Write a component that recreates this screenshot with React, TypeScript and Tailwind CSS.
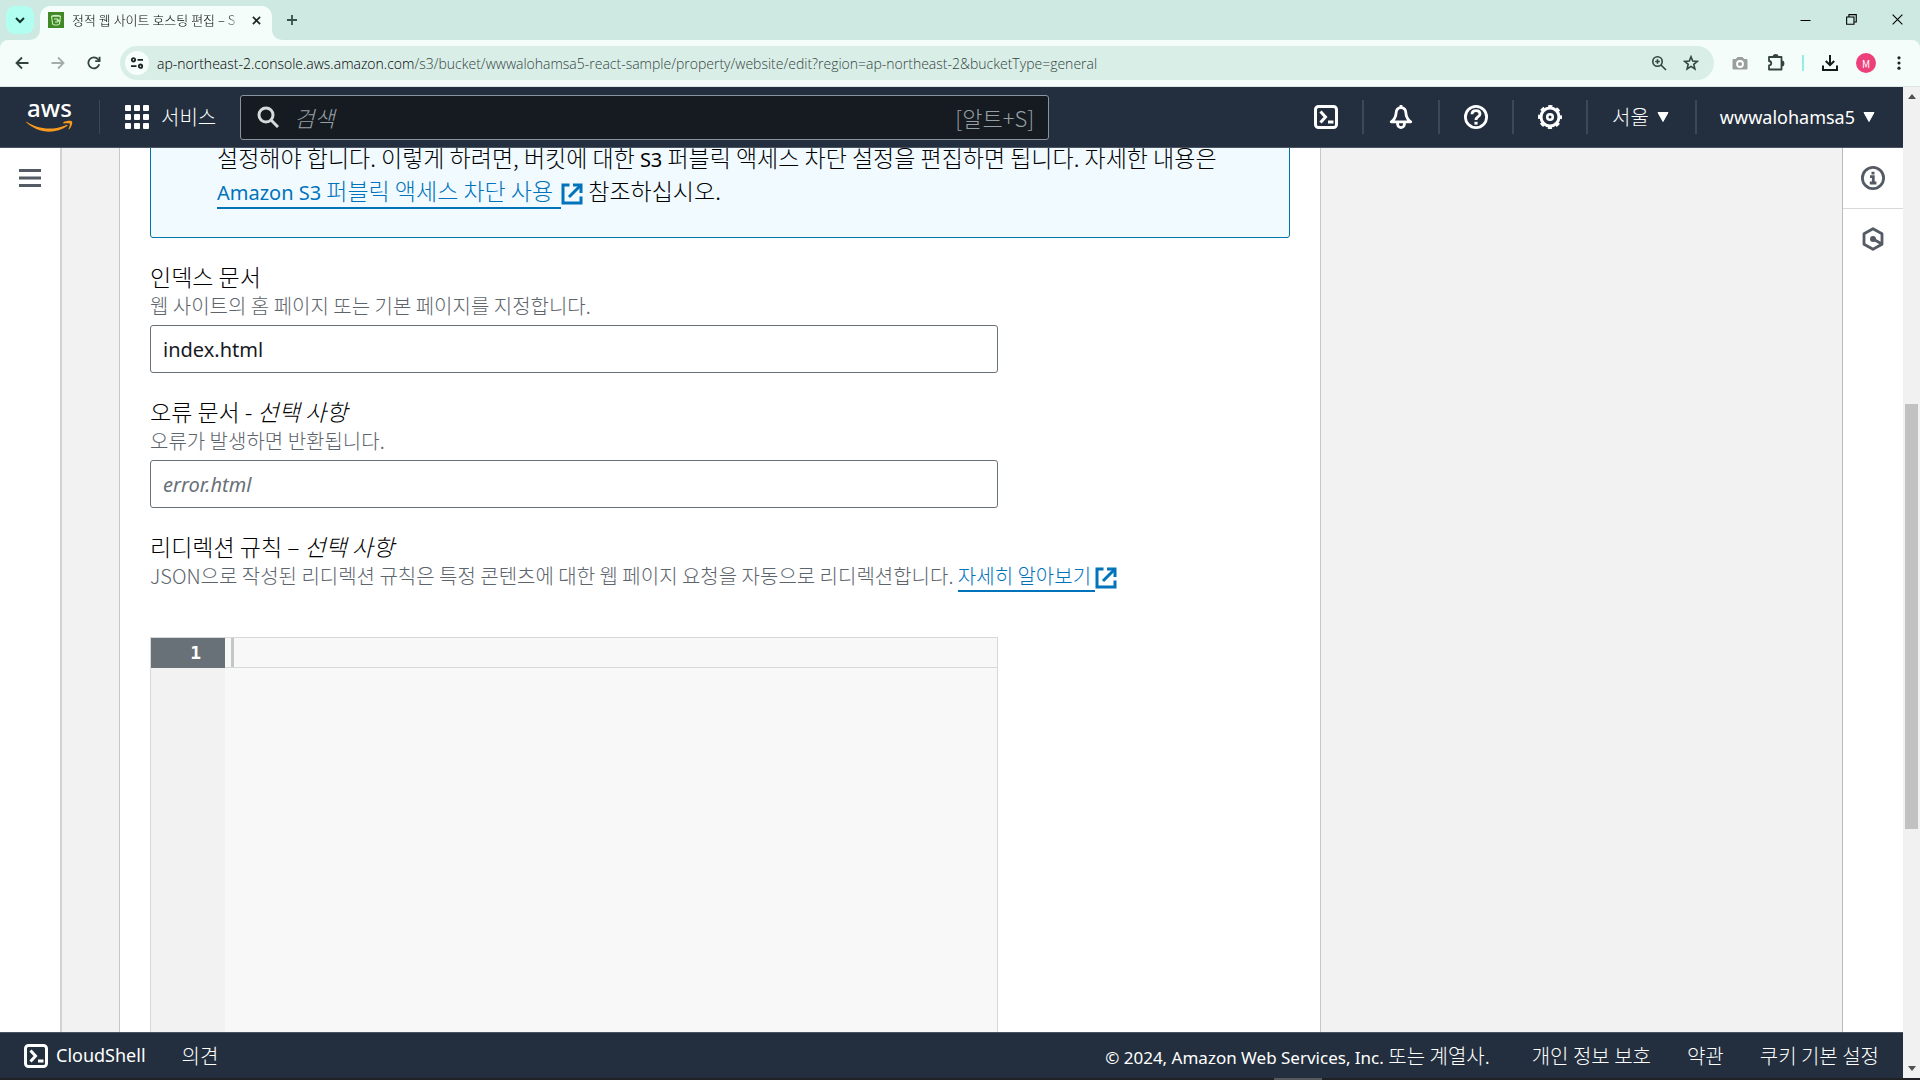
import type { ReactNode } from "react";

const KOREAN = "font-['Noto_Sans_CJK_KR',sans-serif] font-light";

function Latin({ children }: { children: ReactNode }) {
  return <span className="font-['Noto_Sans',sans-serif] text-[20px] leading-none font-normal">{children}</span>;
}

function CloudShellIcon() {
  return (
    <svg viewBox="0 0 24 24" className="size-6 shrink-0" fill="none" stroke="currentColor" strokeWidth="3">
      <rect x="1.5" y="1.5" width="21" height="21" rx="3" />
      <path d="M6.5 6.5l5 5.5-5 5.5" />
      <path d="M14 17h5.5" />
    </svg>
  );
}

function BellIcon() {
  return (
    <svg viewBox="0 0 24 24" className="size-6" fill="none" stroke="currentColor" strokeWidth="2.8" strokeLinejoin="round">
      <path d="M12 2.600c-3 0-4.700 2.200-4.900 5.400-.2 4.200-1.600 6.600-4.900 8.800h19.600c-3.300-2.200-4.700-4.600-4.900-8.800C16.700 4.800 15 2.600 12 2.600z" />
      <path d="M12 0v3" />
      <path d="M8.600 17v2.200a3.400 3.400 0 0 0 6.800 0V17" />
    </svg>
  );
}

function HelpIcon() {
  return (
    <svg viewBox="0 0 24 24" className="size-6" fill="none" stroke="currentColor" strokeWidth="2.8">
      <circle cx="12" cy="12" r="10.600" />
      <path d="M8 9.300C8 7 9.600 5.700 12 5.700s4 1.300 4 3.300c0 2.800-4 2.700-4 6" />
      <path d="M12 16.800v2.800" strokeWidth="3.200" />
    </svg>
  );
}

function GearIcon() {
  return (
    <svg viewBox="0 0 24 24" className="size-6" fill="none" stroke="currentColor">
      <circle cx="12" cy="12" r="9" strokeWidth="3" />
      <circle cx="12" cy="12" r="10.800" strokeWidth="2.400" strokeDasharray="4.240 4.240" strokeDashoffset="2.120" />
      <circle cx="12" cy="12" r="2.800" strokeWidth="2.600" />
    </svg>
  );
}

function ExternalIcon() {
  return (
    <svg viewBox="0 0 22 22" className="-my-1 inline-block size-[22px] align-[-1px]" fill="none" stroke="currentColor" strokeWidth="3">
      <path d="M8.500 2H2v18h18v-6.500" />
      <path d="M12 2h8v8" />
      <path d="M20 2L8 14" />
    </svg>
  );
}

function Caret() {
  return (
    <svg viewBox="0 0 12 10" className="h-[10px] w-3" fill="currentColor">
      <path d="M1 .5h10L6 9.500z" stroke="currentColor" strokeLinejoin="round" />
    </svg>
  );
}

function AwsLogo() {
  return (
    <a href="#home" aria-label="AWS" className="flex w-[47px] flex-col items-center font-['Noto_Sans',sans-serif] text-white">
      <span className="h-[17px] text-[24px] leading-[10px] font-medium">aws</span>
      <svg viewBox="0 0 47 12" className="h-3 w-[47px]">
        <path d="M.6 1.800C6.600 6 15 8.600 23 8.600c6 0 12-1.400 17.400-3.700.9-.4 1.600.5.800 1.200C36 10 29.400 11.800 23.400 11.800 14.600 11.800 6.400 8.200.4 2.600-.1 2.100.2 1.500.6 1.800z" fill="#f79a1e" />
        <path d="M37.500 2.300c2-1.400 7.600-2 8.500-.9.8 1.200-.5 5.800-2.900 7.900-.4.300-.8.100-.6-.4.600-1.400 1.800-4.500 1.200-5.200-.6-.8-3.900-.400-5.900-.1-.6.1-.8-.9-.3-1.300z" fill="#f79a1e" />
      </svg>
    </a>
  );
}

function BrowserTabs() {
  return (
    <div className="flex h-10 items-start bg-[#cde9e2] pl-1.5">
      <button aria-label="탭 검색" className="mt-1.5 flex size-7 items-center justify-center rounded-[9px] bg-[#b0fff0] text-[#16302b]">
        <svg viewBox="0 0 10 10" className="size-[10px]" fill="none" stroke="currentColor" strokeWidth="2">
          <path d="M1 3l4 4 4-4" />
        </svg>
      </button>
      <div className="relative mt-1.5 ml-1.5 flex h-[34px] w-[232px] items-center rounded-t-[10px] bg-[#f4fdfa] pr-2 pb-1.5 pl-2">
        <svg viewBox="0 0 10 10" className="absolute bottom-0 -left-[10px] size-[10px]" fill="#f4fdfa">
          <path d="M10 0v10H0A10 10 0 0 0 10 0z" />
        </svg>
        <svg viewBox="0 0 10 10" className="absolute -right-[10px] bottom-0 size-[10px]" fill="#f4fdfa">
          <path d="M0 0v10h10A10 10 0 0 1 0 0z" />
        </svg>
        <svg viewBox="0 0 16 16" className="size-4 shrink-0">
          <rect width="16" height="16" fill="#3f8a24" />
          <path d="M3.500 4.200h9l-1.200 8.200c-1.800.9-4.800.9-6.600 0z" fill="none" stroke="#d9f3cd" strokeWidth="1" />
          <path d="M3.500 4.200c2-1.200 7-1.200 9 0M6 7h4v3H7M8.500 8l4.200 1.200" fill="none" stroke="#d9f3cd" strokeWidth="1" />
        </svg>
        <span className="ml-2 w-[168px] overflow-hidden mask-r-from-92% mask-r-to-100% text-[13px] leading-5 whitespace-nowrap text-black">
          정적 웹 사이트 호스팅 편집 – S
        </span>
        <button aria-label="탭 닫기" className="ml-auto flex size-4 items-center justify-center text-[#1b2623]">
          <svg viewBox="0 0 10 10" className="size-[9px]" stroke="currentColor" strokeWidth="1.800">
            <path d="M1 1l8 8M9 1L1 9" />
          </svg>
        </button>
      </div>
      <button aria-label="새 탭" className="mt-3 ml-3 flex size-4 items-center justify-center text-[#34514a]">
        <svg viewBox="0 0 12 12" className="size-3" stroke="currentColor" strokeWidth="1.800">
          <path d="M6 1v10M1 6h10" />
        </svg>
      </button>
      <div className="mt-3.5 mr-[17px] ml-auto flex items-center gap-[35px] text-black">
        <button aria-label="최소화">
          <svg viewBox="0 0 11 11" className="size-[11px]" stroke="currentColor"><path d="M.5 6.500h10" /></svg>
        </button>
        <button aria-label="이전 크기로 복원">
          <svg viewBox="0 0 12 12" className="size-[11px]" fill="none" stroke="currentColor" strokeWidth="1.200">
            <path d="M.7 3.200h8v8h-8zM3.200 3.200V.7h8v8H8.700" />
          </svg>
        </button>
        <button aria-label="닫기">
          <svg viewBox="0 0 12 12" className="size-[11px]" stroke="currentColor" strokeWidth="1.200"><path d="M.7.7l10.600 10.600M11.300.7L.7 11.300" /></svg>
        </button>
      </div>
    </div>
  );
}

function BrowserToolbar() {
  return (
    <div className="bg-[#cde9e2]">
      <div className="flex h-[47px] items-center rounded-t-lg border-b border-[#dce6e3] bg-[#f4fdfa] pr-[19px] pl-[15px] text-[#33443f]">
        <button aria-label="뒤로">
          <svg viewBox="0 0 14 14" className="size-[14px]" fill="none" stroke="currentColor" strokeWidth="1.800">
            <path d="M13.500 7H2M7 1.500L1.500 7 7 12.500" />
          </svg>
        </button>
        <button aria-label="앞으로" className="ml-[22px] text-[#a3aeab]">
          <svg viewBox="0 0 14 14" className="size-[14px]" fill="none" stroke="currentColor" strokeWidth="1.800">
            <path d="M.5 7H12M7 1.500L12.500 7 7 12.500" />
          </svg>
        </button>
        <button aria-label="새로고침" className="ml-[22px]">
          <svg viewBox="0 0 14 14" className="size-[14px]" fill="none" stroke="currentColor" strokeWidth="1.800">
            <path d="M12.200 8.300A5.500 5.500 0 1 1 11 3.200L12.600 4.800" />
            <path d="M12.600.8v4.400H8.200" />
          </svg>
        </button>
        <div className="ml-[19px] flex h-[34px] min-w-0 flex-1 items-center rounded-full bg-[#daeee8] pr-[15px] pl-[5px]">
          <button aria-label="사이트 정보" className="flex size-6 shrink-0 items-center justify-center rounded-full bg-[#f7fffc] text-[#1b2623]">
            <svg viewBox="0 0 14 12" className="h-3 w-[14px]" fill="none" stroke="currentColor" strokeWidth="1.800">
              <circle cx="3.500" cy="2.800" r="1.700" />
              <path d="M7.500 2.800H13M1 9.200h5.500" />
              <circle cx="10.500" cy="9.200" r="1.700" />
            </svg>
          </button>
          <div className="ml-2 min-w-0 flex-1 font-['Open_Sans',sans-serif] text-[14px] font-light whitespace-nowrap text-[#33443f]">
            <span className="text-black">ap-northeast-2.console.aws.amazon.com</span>
            /s3/bucket/wwwalohamsa5-react-sample/property/website/edit?region=ap-northeast-2&amp;bucketType=general
          </div>
          <button aria-label="확대/축소">
            <svg viewBox="0 0 16 16" className="size-4" fill="none" stroke="currentColor" strokeWidth="1.600">
              <circle cx="6.500" cy="6.500" r="4.700" />
              <path d="M10 10l5 5M6.500 4.200v4.600M4.200 6.500h4.600" />
            </svg>
          </button>
          <button aria-label="북마크" className="ml-4">
            <svg viewBox="0 0 16 16" className="size-4" fill="none" stroke="currentColor" strokeWidth="1.600">
              <path d="M8 1.800l1.700 4.300 4.600.3-3.500 3 1.100 4.500L8 11.400l-3.900 2.500 1.100-4.500-3.500-3 4.600-.3z" />
            </svg>
          </button>
        </div>
        <div className="ml-[18px] flex items-center">
          <button aria-label="화면 캡처" className="text-[#9a9f9d]">
            <svg viewBox="0 0 16 14" className="h-[14px] w-4" fill="none" stroke="currentColor">
              <path d="M1 3.500h3L5.500 1.500h5L12 3.500h3v9.500H1z" fill="currentColor" strokeWidth="1" strokeLinejoin="round" />
              <circle cx="8" cy="8" r="3" stroke="#fff" strokeWidth="1.800" />
            </svg>
          </button>
          <button aria-label="확장 프로그램" className="ml-[19px]">
            <svg viewBox="0 0 18 18" className="size-[18px]" fill="none" stroke="currentColor" strokeWidth="1.800" strokeLinejoin="round">
              <path d="M2 3h12.500v12.500H2v-4c3-.3 3-4.200 0-4.500z" />
              <path d="M6.500 2.500a2 1.500 0 0 1 4 0M15 7.500a1.500 2 0 0 1 0 4" fill="currentColor" />
            </svg>
          </button>
          <span className="ml-[17px] h-4 w-0.5 bg-[#93efe2]" />
          <button aria-label="다운로드" className="ml-[18px] text-[#111b18]">
            <svg viewBox="0 0 16 16" className="size-4" fill="none" stroke="currentColor" strokeWidth="2">
              <path d="M8 0v10M3.800 6L8 10.200 12.200 6M1 10.500V15h14v-4.500" />
            </svg>
          </button>
          <button aria-label="프로필" className="ml-[18px] flex size-5 items-center justify-center rounded-full bg-[#ec407a] text-[10px] font-normal text-white">
            M
          </button>
          <button aria-label="메뉴" className="ml-[21px] text-[#1b2623]">
            <svg viewBox="0 0 4 14" className="h-[14px] w-1" fill="currentColor">
              <circle cx="2" cy="1.800" r="1.600" />
              <circle cx="2" cy="7" r="1.600" />
              <circle cx="2" cy="12.200" r="1.600" />
            </svg>
          </button>
        </div>
      </div>
    </div>
  );
}

function Divider() {
  return <span className="h-[34px] w-0.5 shrink-0 bg-[#3c4757]" />;
}

function ConsoleNav() {
  return (
    <header className="flex h-[61px] shrink-0 items-center border-b border-[#4a5361] bg-[#232f3e] pr-7 pl-[26px] text-white">
      <AwsLogo />
      <span className="ml-[26px] h-[34px] w-px bg-[#3c4757]" />
      <button className="ml-[25px] flex items-center gap-3 text-[20px]">
        <svg viewBox="0 0 24 24" className="size-6" fill="currentColor">
          {[0, 9, 18].map((y) => [0, 9, 18].map((x) => <rect key={`${x}-${y}`} x={x} y={y} width="6" height="6" rx="1" />))}
        </svg>
        서비스
      </button>
      <label className="ml-6 flex h-[45px] w-[809px] items-center rounded-[3px] border border-[#8a949f] bg-[#161a21] pr-[14px] pl-4">
        <svg viewBox="0 0 22 22" className="size-[22px] shrink-0 text-[#d5dbdb]" fill="none" stroke="currentColor" strokeWidth="3">
          <circle cx="9" cy="9" r="7" />
          <path d="M14 14l7 7" />
        </svg>
        <input aria-label="검색" placeholder="검색" className="ml-[15px] min-w-0 flex-1 bg-transparent text-[22px] italic outline-none placeholder:text-[#95a0a4]" />
        <span className="text-[22px] text-[#95a0a4]">[알트+S]</span>
      </label>
      <div className="ml-auto flex items-center">
        <button aria-label="CloudShell"><CloudShellIcon /></button>
        <span className="w-6" />
        <Divider />
        <span className="w-[25px]" />
        <button aria-label="알림"><BellIcon /></button>
        <span className="w-[25px]" />
        <Divider />
        <span className="w-6" />
        <button aria-label="도움말"><HelpIcon /></button>
        <span className="w-6" />
        <Divider />
        <span className="w-6" />
        <button aria-label="설정"><GearIcon /></button>
        <span className="w-6" />
        <Divider />
        <button className="mr-[26px] ml-6 flex items-center gap-2 text-[20px]">서울 <Caret /></button>
        <Divider />
        <button className="ml-[23px] flex items-center gap-2 font-['Noto_Sans',sans-serif] text-[18px] font-normal">wwwalohamsa5 <Caret /></button>
      </div>
    </header>
  );
}

function Field({ id, label, optional, description, children }: {
  id: string;
  label: string;
  optional?: string;
  description: ReactNode;
  children: ReactNode;
}) {
  return (
    <div className="flex flex-col">
      <label htmlFor={id} className="text-[23px] leading-9 text-black">
        {label}
        {optional && <i className="italic">{optional}</i>}
      </label>
      <p className="mb-[7px] text-[20px] leading-6 text-[#5c646c]">{description}</p>
      {children}
    </div>
  );
}

const INPUT = "h-12 w-full max-w-[848px] rounded-[3px] border border-[#687078] bg-white px-3 font-['Noto_Sans',sans-serif] text-[20px] font-normal text-[#16191f] outline-none placeholder:text-[#687078] placeholder:italic";

function EditPanel() {
  return (
    <main className="min-w-0 max-w-[1202px] flex-1 border-x border-[#c6c8c9] bg-white px-[30px]">
      <div className="-mt-2 rounded-[3px] border border-[#0073a8] bg-[#f1faff] px-[66px] pb-[30px] text-[23px] leading-[33px] text-black">
        설정해야 합니다. 이렇게 하려면, 버킷에 대한 <Latin>S3</Latin> 퍼블릭 액세스 차단 설정을 편집하면 됩니다. 자세한 내용은{" "}
        <a href="#block-public-access" className="text-[#0073bb]">
          <span className="border-b-2 border-[#0073bb] pr-2"><Latin>Amazon S3</Latin> 퍼블릭 액세스 차단 사용</span>
          <ExternalIcon />
        </a>{" "}
        참조하십시오.
      </div>
      <form className="mt-5 flex flex-col gap-5">
        <Field id="index-doc" label="인덱스 문서" description="웹 사이트의 홈 페이지 또는 기본 페이지를 지정합니다.">
          <input id="index-doc" defaultValue="index.html" className={INPUT} />
        </Field>
        <Field id="error-doc" label="오류 문서 - " optional="선택 사항" description="오류가 발생하면 반환됩니다.">
          <input id="error-doc" placeholder="error.html" className={INPUT} />
        </Field>
        <Field
          id="rules"
          label="리디렉션 규칙 – "
          optional="선택 사항"
          description={
            <>
              JSON으로 작성된 리디렉션 규칙은 특정 콘텐츠에 대한 웹 페이지 요청을 자동으로 리디렉션합니다.{" "}
              <a href="#learn-more" className="text-[#0073bb]">
                <span className="border-b-2 border-[#0073bb] pr-1">자세히 알아보기</span>
                <ExternalIcon />
              </a>
            </>
          }
        >
          <div className="mt-[42px] flex h-[480px] w-full max-w-[848px] border border-[#d5d9d9] bg-[#f8f8f8]">
            <div className="w-[74px] bg-[#f2f2f2]">
              <div className="h-[30px] bg-[#687078] pr-6 text-right font-['DejaVu_Sans_Mono',monospace] text-[18px] leading-[30px] font-bold text-white">1</div>
            </div>
            <div className="flex flex-1 flex-col">
              <div className="flex h-[30px] border-b border-[#d5d9d9] pl-1.5">
                <textarea id="rules" className="h-full flex-1 resize-none border-l-[3px] border-[#c6c6c6] bg-transparent outline-none" />
              </div>
            </div>
          </div>
        </Field>
      </form>
    </main>
  );
}

function ConsoleFooter() {
  return (
    <footer className="flex h-[46px] shrink-0 items-center border-t border-[#4a5361] bg-[#232f3e] pr-6 pl-6 text-[20px] text-white">
      <button className="flex items-center gap-2 font-['Noto_Sans',sans-serif] text-[18px] font-normal"><CloudShellIcon />CloudShell</button>
      <a href="#feedback" className="ml-9">의견</a>
      <span className="ml-auto">
        <span className="font-['Noto_Sans',sans-serif] text-[17px] leading-none font-normal">© 2024, Amazon Web Services, Inc.</span> 또는 계열사.
      </span>
      <a href="#privacy" className="ml-[42px]">개인 정보 보호</a>
      <a href="#terms" className="ml-9">약관</a>
      <a href="#cookies" className="ml-9">쿠키 기본 설정</a>
    </footer>
  );
}

export default function App() {
  return (
    <div className={`flex h-screen flex-col overflow-hidden bg-[#f2f2f2] ${KOREAN}`}>
      <BrowserTabs />
      <BrowserToolbar />
      <div className="flex min-h-0 flex-1">
        <div className="flex min-w-0 flex-1 flex-col">
          <ConsoleNav />
          <div className="flex min-h-0 flex-1 overflow-hidden">
            <aside className="w-[62px] shrink-0 border-r-2 border-[#d0d2d3] bg-white pt-[21px] pl-[19px]">
              <button aria-label="메뉴 열기" className="block text-[#545b64]">
                <svg viewBox="0 0 22 18" className="h-[18px] w-[22px]" stroke="currentColor" strokeWidth="3">
                  <path d="M0 1.500h22M0 9h22M0 16.500h22" />
                </svg>
              </button>
            </aside>
            <div className="flex min-w-0 flex-1 pl-[57px]"><EditPanel /></div>
            <aside className="flex w-[61px] shrink-0 flex-col border-l border-[#b9bcbe] bg-white text-[#545b64]">
              <button aria-label="정보" className="flex h-[61px] items-center justify-center border-b border-[#d5d9d9]">
                <svg viewBox="0 0 24 24" className="size-6" fill="none" stroke="currentColor" strokeWidth="2.800">
                  <circle cx="12" cy="12" r="10.600" />
                  <path d="M9 10.700h3.300V17M8.800 17h6.600M10.500 7.200h3" />
                </svg>
              </button>
              <button aria-label="자습서" className="flex h-[60px] items-center justify-center">
                <svg viewBox="0 0 24 24" className="size-6" fill="none" stroke="currentColor" strokeWidth="2.800">
                  <path d="M12 1.700l9 5v10.600l-9 5-9-5V6.700z" strokeLinejoin="round" />
                  <circle cx="12" cy="12" r="3" fill="currentColor" stroke="none" />
                  <path d="M12 12l8.500 4.700" />
                </svg>
              </button>
            </aside>
          </div>
          <ConsoleFooter />
        </div>
        <div className="flex w-[17px] flex-col items-center bg-[#f1f1f1] text-[#505050]">
          <svg viewBox="0 0 8 5" className="mt-[7px] h-[5px] w-2" fill="currentColor"><path d="M0 5l4-5 4 5z" /></svg>
          <div className="mt-[305px] h-[425px] w-[13px] bg-[#c1c1c1]" />
          <svg viewBox="0 0 8 5" className="mt-auto mb-[7px] h-[5px] w-2" fill="currentColor"><path d="M0 0l4 5 4-5z" /></svg>
        </div>
      </div>
      <div className="flex h-0.5 shrink-0 justify-center bg-[#1f2124] pl-[676px]">
        <span className="h-full w-12 bg-[#55585c]" />
      </div>
    </div>
  );
}
